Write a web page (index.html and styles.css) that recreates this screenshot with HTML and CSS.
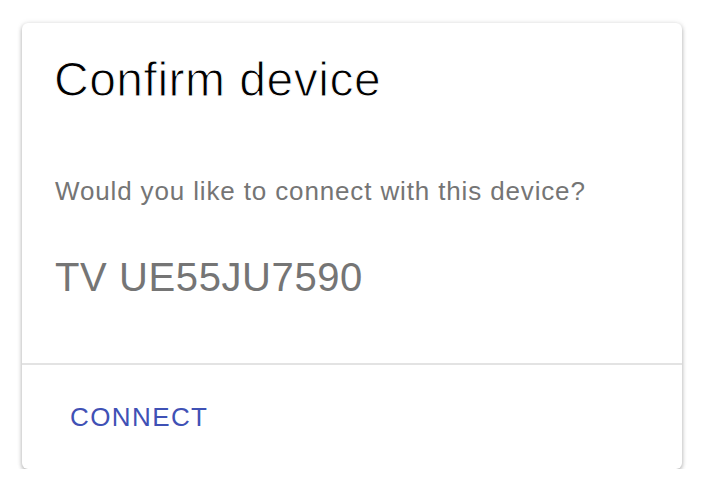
FILE: index.html
```html
<!DOCTYPE html>
<html>
<head>
<meta charset="utf-8">
<link rel="stylesheet" href="styles.css">
</head>
<body>
<div class="card">
  <div class="content">
    <h1 class="title">Confirm device</h1>
    <p class="question">Would you like to connect with this device?</p>
    <p class="device">TV UE55JU7590</p>
  </div>
  <div class="actions">
    <button class="btn">CONNECT</button>
  </div>
</div>
</body>
</html>
```
FILE: styles.css
```css
html, body {
  margin: 0;
  padding: 0;
  background: #ffffff;
}
body {
  font-family: "Liberation Sans", Arial, sans-serif;
}
.card {
  margin: 23px 0 0 22px;
  width: 660px;
  height: 446px;
  box-sizing: border-box;
  background: #ffffff;
  border-radius: 6px;
  box-shadow: 0 2px 4px rgba(0,0,0,0.3), 0 0 6px rgba(0,0,0,0.08);
  display: flex;
  flex-direction: column;
}
.content {
  padding: 29px 33px 0 32px;
  border-bottom: 2px solid #e3e3e3;
  height: 342px;
  box-sizing: border-box;
}
.title {
  margin: 0;
  font-size: 48px;
  line-height: 56px;
  font-weight: 400;
  letter-spacing: 0.5px;
  color: #000;
  -webkit-text-stroke: 1px #ffffff;
}
.question {
  margin: 67px 0 0 1px;
  font-size: 26px;
  line-height: 32px;
  letter-spacing: 0.86px;
  color: #757575;
}
.device {
  margin: 46px 0 0 1px;
  font-size: 40px;
  line-height: 48px;
  letter-spacing: 0.6px;
  color: #757575;
}
.actions {
  padding: 0 16px;
  flex: 1;
  display: flex;
  align-items: center;
}
.btn {
  font-family: "Liberation Sans", Arial, sans-serif;
  background: none;
  border: 0;
  padding: 0 16px 0 32px;
  font-size: 26px;
  line-height: 32px;
  letter-spacing: 1.4px;
  color: #3f51b5;
  margin-top: 0;
}
```
